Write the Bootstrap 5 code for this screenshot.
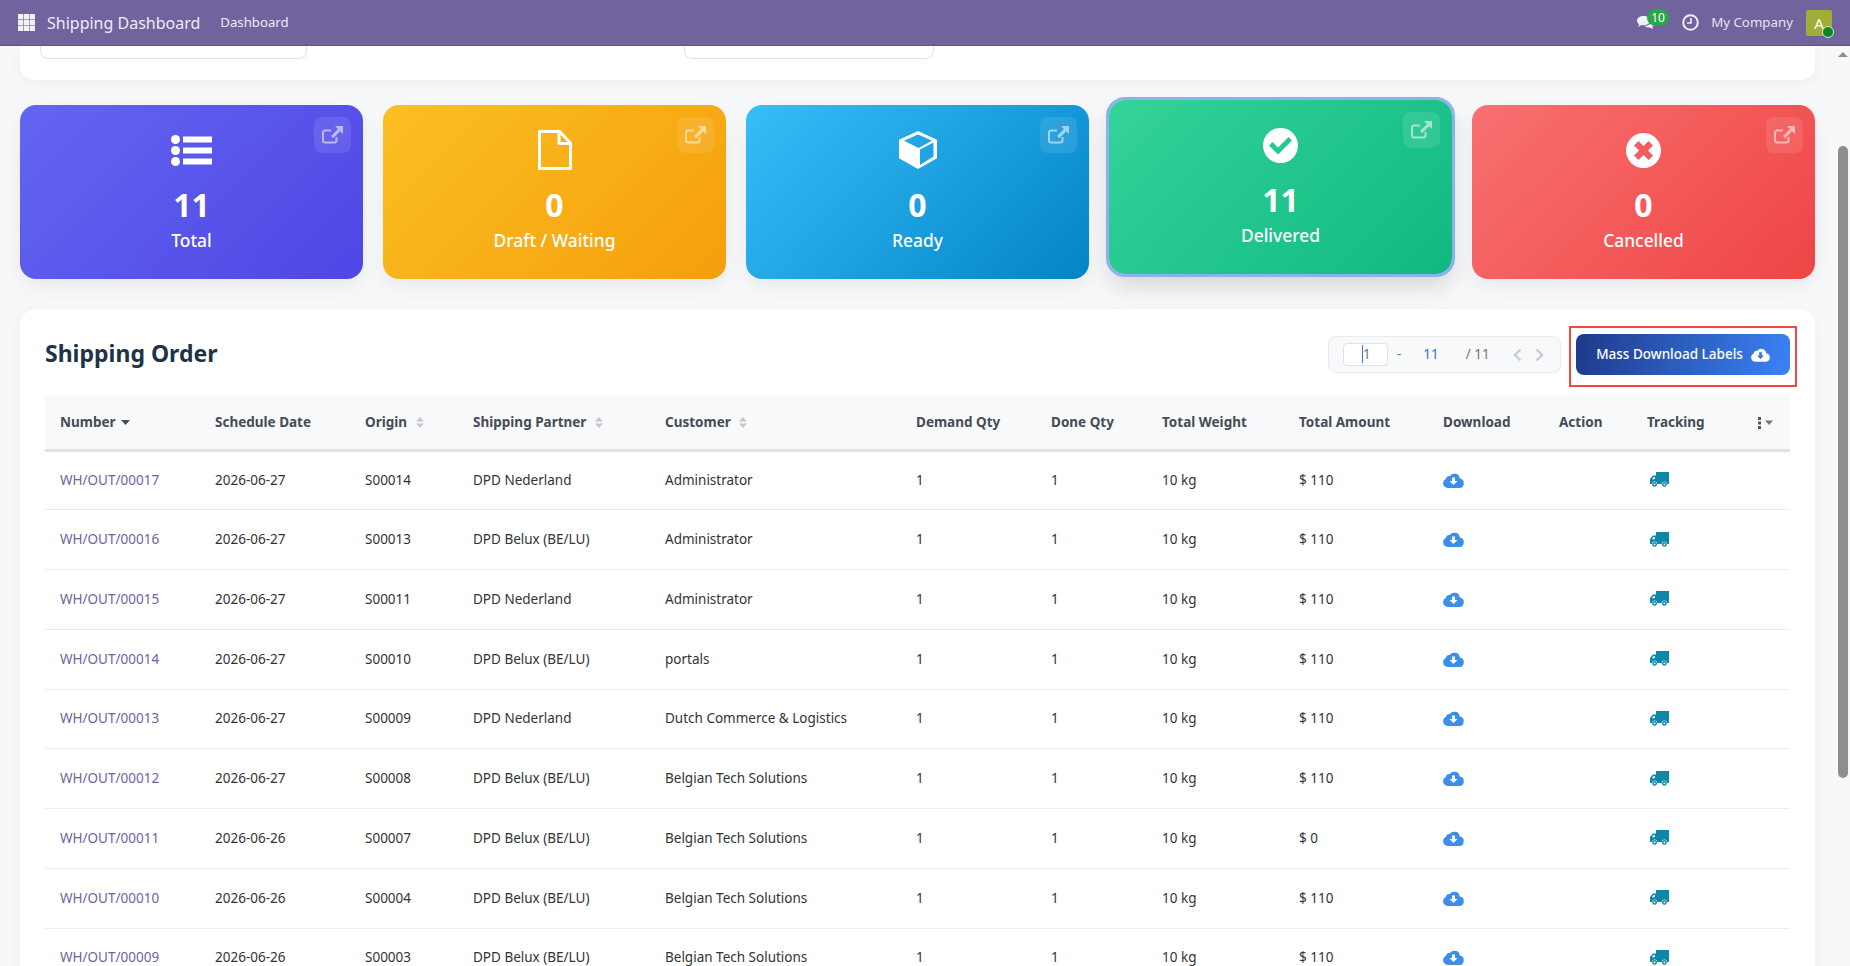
<!DOCTYPE html>
<html lang="en">
<head>
  <meta charset="UTF-8"/>
  <title>Shipping Dashboard</title>
  <link href="https://cdn.jsdelivr.net/npm/bootstrap@5.3.0/dist/css/bootstrap.min.css" rel="stylesheet"/>
  <style>
    html, body { height: 100%; overflow: hidden; }
    body { font-family: "Noto Sans", "Liberation Sans", sans-serif; font-size: 13.5px; color: #333; background: #f7f8fa; }
    .top-nav { height: 46px; background: #71639e; border-bottom: 1px solid #5f5488; padding: 0; color: #f3f1f8; flex-wrap: nowrap; position: relative; z-index: 2; }
    .apps-icon { width: 17px; height: 17px; margin-left: 18px; }
    .nav-title { font-size: 16px; margin-left: 12px; color: #eeebf5; }
    .nav-link-item { font-size: 13.2px; margin-left: 20px; color: #eeebf5; }
    .chat-wrap { width: 38px; height: 26px; }
    .chat-glyph { left: 1px; top: 50%; transform: translateY(-50%); }
    .nav-count { top: -1px; left: 11px; background: #28a745; color: #fff; font-size: 12px; line-height: 17px; height: 17px; padding: 0 4px; border-radius: 9px; }
    .nav-company { font-size: 13.3px; margin: 0 13px 0 12px; color: #e6e2f0; }
    .nav-avatar { width: 26px; height: 26px; background: #a2ad37; color: #fff; font-size: 15px; line-height: 26px; border-radius: 2px; margin-right: 18px; }
    .nav-presence { width: 12px; height: 12px; right: -2px; bottom: -2px; background: #0a8a1e; border: 1px solid #cfe8e8; border-radius: 50%; }
    .page-area { height: calc(100vh - 46px); }
    .main-scroll { padding: 0 20px; overflow: hidden; }
    .filter-panel { height: 34px; background: #fff; border-radius: 0 0 14px 14px; box-shadow: 0 4px 14px rgba(0,0,0,.04); }
    .filter-stub { height: 13px; border: 1px solid #e2e2e2; border-top: 0; border-radius: 0 0 8px 8px; }
    .filter-a { width: 267px; margin-left: 20px; }
    .filter-b { width: 250px; margin-left: 377px; }
    .tile-row { margin-top: 25px; gap: 20px; }
    .stat-tile { flex: 1 1 0; height: 174px; border-radius: 16px; color: #fff; padding-top: 25px; box-shadow: 0 8px 20px rgba(0,0,0,.06); }
    .tile-total { background: linear-gradient(135deg, #6366f1, #4f46e5); }
    .tile-draft { background: linear-gradient(135deg, #fbbf24, #f59e0b); }
    .tile-ready { background: linear-gradient(135deg, #38bdf8, #0284c7); }
    .tile-done { background: linear-gradient(135deg, #34d399, #10b981); transform: translateY(-5px); outline: 3px solid #8fb0ee; box-shadow: 0 12px 24px rgba(0,0,0,.14); }
    .tile-cancel { background: linear-gradient(135deg, #f87171, #ef4444); }
    .tile-icon { height: 40px; }
    .tile-num { font-size: 32px; font-weight: 700; line-height: 40px; margin-top: 15px; }
    .tile-label { font-size: 17.4px; font-weight: 500; line-height: 24px; margin-top: 3px; }
    .tile-open { top: 12px; right: 12px; width: 37px; height: 36px; border-radius: 8px; background: rgba(255,255,255,.1); }
    .order-panel { margin-top: 30px; background: #fff; border-radius: 16px 16px 0 0; padding: 25px 25px 0 25px; box-shadow: 0 4px 14px rgba(0,0,0,.04); }
    .order-head { height: 41px; margin-bottom: 20px; }
    .order-title { font-size: 23px; font-weight: 700; color: #1f3347; margin: 0 0 2px; }
    .pager-box { height: 37px; width: 233px; background: #f8f9fa; border: 1px solid #e9ecef; border-radius: 8px; margin-right: 15px; padding-left: 14px; color: #777; }
    .pager-input { width: 45px; height: 23px; background: #fff; border: 1px solid #dee2e6; border-radius: 4px; padding-left: 18px; line-height: 21px; }
    .pager-caret { border-left: 1px solid #3b6fd8; }
    .pager-dash { margin-left: 9px; }
    .pager-end { color: #3b6fd8; margin-left: 22px; }
    .pager-total { margin-left: 27px; }
    .pager-arrows { margin-left: 23px; gap: 13px; }
    .mass-wrap { width: 214px; }
    .mass-btn { width: 214px; height: 41px; border: 0; border-radius: 8px; color: #fff; font-weight: 500; font-size: 13.5px; background: linear-gradient(100deg, #1e3a8a, #3b82f6); gap: 8px; }
    .red-frame { left: -7px; right: -7px; top: -8px; bottom: -12px; border: 2px solid #f44545; pointer-events: none; }
    .order-table { table-layout: fixed; width: 1745px; margin: 0; }
    .order-table th { height: 55px; background: #f8f9fa; color: #444c55; font-weight: 700; padding: 0 0 0 15px; border-bottom: 3px solid #dee2e6; vertical-align: middle; white-space: nowrap; }
    .order-table td { height: 59.75px; padding: 0 0 1px 15px; color: #333; border-bottom: 1px solid #ececec; vertical-align: middle; white-space: nowrap; }
    .order-table a { color: #71639e; text-decoration: none; }
    .sort-icon { margin-left: 5px; }
    .sort-active { margin-left: 2px; }
    .ic-cloud { width: 21px; height: 16px; display: block; }
    .ic-truck { width: 19px; height: 15px; display: block; margin-left: 3px; }
    .w-a { width: 155px; } .w-b { width: 150px; } .w-c { width: 108px; } .w-d { width: 192px; }
    .w-e { width: 251px; } .w-f { width: 135px; } .w-g { width: 111px; } .w-h { width: 137px; }
    .w-i { width: 144px; } .w-j { width: 116px; } .w-k { width: 88px; } .w-l { width: 111px; } .w-m { width: 47px; }
    .fake-scroll { width: 15px; background: #f8f8f8; }
    .scroll-up { width: 0; height: 0; border: 5px solid transparent; border-top: 0; border-bottom: 5px solid #8e8e8e; margin: 6px auto 0; }
    .scroll-thumb { width: 10px; height: 632px; background: #8e8e8e; border-radius: 5px; margin: 89px 0 0 3px; }
  </style>
</head>
<body>

<svg width="0" height="0" class="d-block position-absolute">
  <symbol id="i-ext" viewBox="0 0 21 18">
    <path d="M14.5 11v3.5a2 2 0 0 1-2 2H3a2 2 0 0 1-2-2V6.5a2 2 0 0 1 2-2h6" fill="none" stroke="#fff" stroke-width="2"/>
    <path d="M13 0h8v8l-2.8-2.8-7 7-2.2-2.2 7-7z" fill="#fff"/>
  </symbol>
  <symbol id="i-cloud" viewBox="0 0 21 16">
    <path fill-rule="evenodd" d="M4.800 16A4.800 4.800 0 0 1 3 6.800 3 3 0 0 1 6.800 4.100 5.500 5.500 0 0 1 16.800 6.500 4.800 4.800 0 0 1 16.500 16zM9 5.500V9H6.500l4 4 4-4H12V5.500z"/>
  </symbol>
  <symbol id="i-truck" viewBox="0 0 19 15">
    <path fill-rule="evenodd" d="M6 0h13v12h-2a2.600 2.600 0 0 0-5.200 0H7.200a2.600 2.600 0 0 0-5.200 0H0V7l3-3.500h3zM1.800 7.200h3V5H3.700z"/>
    <path fill-rule="evenodd" d="M4.600 10a2.400 2.400 0 1 0 .01 0zm0 1.500a.9.9 0 1 1-.01 0zM14.400 10a2.400 2.400 0 1 0 .01 0zm0 1.500a.9.9 0 1 1-.01 0z"/>
  </symbol>
</svg>

<nav class="navbar top-nav">
  <div class="d-flex align-items-center">
    <svg class="apps-icon" viewBox="0 0 17 17" fill="#f3f1f8">
      <rect width="5.300" height="5.300"/><rect x="5.850" width="5.300" height="5.300"/><rect x="11.700" width="5.300" height="5.300"/>
      <rect y="5.850" width="5.300" height="5.300"/><rect x="5.850" y="5.850" width="5.300" height="5.300"/><rect x="11.700" y="5.850" width="5.300" height="5.300"/>
      <rect y="11.700" width="5.300" height="5.300"/><rect x="5.850" y="11.700" width="5.300" height="5.300"/><rect x="11.700" y="11.700" width="5.300" height="5.300"/>
    </svg>
    <span class="nav-title">Shipping Dashboard</span>
    <span class="nav-link-item">Dashboard</span>
  </div>
  <div class="d-flex align-items-center">
    <div class="chat-wrap position-relative">
      <svg class="chat-glyph position-absolute" width="18" height="16" viewBox="0 0 18 16" fill="#f3f1f8">
        <path d="M6.500 1C3 1 0 3 0 5.700c0 1.500.9 2.700 2.200 3.500L1.200 12l3.300-1.900c.7.100 1.300.2 2 .2 3.600 0 6.500-2 6.500-4.600S10.100 1 6.500 1z"/>
        <path d="M14.500 5.500c0 3-3 5.500-7 5.600 1 .9 2.300 1.400 3.800 1.400.5 0 1 0 1.500-.1l3.200 1.600-.8-2.600C16.900 10.600 18 9.300 18 8c0-1.300-1.400-2.500-3.500-2.500z"/>
      </svg>
      <span class="nav-count position-absolute">10</span>
    </div>
    <svg class="ms-2" width="17" height="17" viewBox="0 0 17 17" fill="none" stroke="#f3f1f8" stroke-width="2">
      <circle cx="8.500" cy="8.500" r="7.300"/><path d="M9 4v5H5" stroke-width="1.600"/>
    </svg>
    <span class="nav-company">My Company</span>
    <div class="nav-avatar position-relative text-center">A<span class="nav-presence position-absolute"></span></div>
  </div>
</nav>

<div class="page-area d-flex">
  <div class="main-scroll flex-grow-1">
    <div class="filter-panel d-flex">
      <div class="filter-stub filter-a"></div>
      <div class="filter-stub filter-b"></div>
    </div>

    <div class="tile-row d-flex">
      <div class="stat-tile tile-total position-relative d-flex flex-column align-items-center">
        <div class="tile-open position-absolute d-flex align-items-center justify-content-center"><svg width="21" height="18" opacity=".55"><use href="#i-ext"/></svg></div>
        <div class="tile-icon d-flex align-items-center">
          <svg width="41" height="31" viewBox="0 0 41 31" fill="#fff">
            <circle cx="4.500" cy="4.500" r="4.500"/><circle cx="4.500" cy="15.500" r="4.500"/><circle cx="4.500" cy="26.500" r="4.500"/>
            <rect x="12" y="1.500" width="29" height="6"/><rect x="12" y="12.500" width="29" height="6"/><rect x="12" y="23.500" width="29" height="6"/>
          </svg>
        </div>
        <div class="tile-num">11</div>
        <div class="tile-label">Total</div>
      </div>

      <div class="stat-tile tile-draft position-relative d-flex flex-column align-items-center">
        <div class="tile-open position-absolute d-flex align-items-center justify-content-center"><svg width="21" height="18" opacity=".55"><use href="#i-ext"/></svg></div>
        <div class="tile-icon d-flex align-items-center">
          <svg width="34" height="40" viewBox="0 0 34 40" fill="none" stroke="#fff" stroke-width="3" stroke-linejoin="round">
            <path d="M1.500 1.500h20L32.500 13v25.500h-31z"/><path d="M21 1.500V13.500h11.500"/>
          </svg>
        </div>
        <div class="tile-num">0</div>
        <div class="tile-label">Draft / Waiting</div>
      </div>

      <div class="stat-tile tile-ready position-relative d-flex flex-column align-items-center">
        <div class="tile-open position-absolute d-flex align-items-center justify-content-center"><svg width="21" height="18" opacity=".55"><use href="#i-ext"/></svg></div>
        <div class="tile-icon d-flex align-items-center">
          <svg width="38" height="38" viewBox="0 0 38 38" fill="#fff">
            <path fill-rule="evenodd" d="M19 0 38 8.700v18.600L19 38 0 27.300V8.700zM19 3.500 5 9.700 19.500 17 33 9.700zM21 18.500V34l13.500-8.500v-14z"/>
          </svg>
        </div>
        <div class="tile-num">0</div>
        <div class="tile-label">Ready</div>
      </div>

      <div class="stat-tile tile-done position-relative d-flex flex-column align-items-center">
        <div class="tile-open position-absolute d-flex align-items-center justify-content-center"><svg width="21" height="18" opacity=".55"><use href="#i-ext"/></svg></div>
        <div class="tile-icon d-flex align-items-center">
          <svg width="35" height="35" viewBox="0 0 35 35" fill="#fff">
            <path fill-rule="evenodd" d="M17.500 0a17.500 17.500 0 1 1-.01 0zM15 26.500l14-14-3.500-3.500L15 19.500l-5.500-5.500L6 17.500z"/>
          </svg>
        </div>
        <div class="tile-num">11</div>
        <div class="tile-label">Delivered</div>
      </div>

      <div class="stat-tile tile-cancel position-relative d-flex flex-column align-items-center">
        <div class="tile-open position-absolute d-flex align-items-center justify-content-center"><svg width="21" height="18" opacity=".55"><use href="#i-ext"/></svg></div>
        <div class="tile-icon d-flex align-items-center">
          <svg width="35" height="35" viewBox="0 0 35 35" fill="#fff">
            <path fill-rule="evenodd" d="M17.500 0a17.500 17.500 0 1 1-.01 0zM17.500 13 12.500 8 8 12.500l5 5-5 5 4.500 4.500 5-5 5 5 4.500-4.500-5-5 5-5L22.500 8z"/>
          </svg>
        </div>
        <div class="tile-num">0</div>
        <div class="tile-label">Cancelled</div>
      </div>
    </div>

    <div class="order-panel">
      <div class="order-head d-flex align-items-center justify-content-between">
        <h2 class="order-title">Shipping Order</h2>
        <div class="d-flex align-items-center">
          <div class="pager-box d-flex align-items-center">
            <div class="pager-input"><span class="pager-caret">1</span></div>
            <span class="pager-dash">-</span>
            <span class="pager-end">11</span>
            <span class="pager-total">/ 11</span>
            <span class="pager-arrows d-flex">
              <svg width="9" height="14" viewBox="0 0 9 14" fill="none" stroke="#c8ccd0" stroke-width="2.400"><path d="M7.500 1.500 2 7l5.500 5.500"/></svg>
              <svg width="9" height="14" viewBox="0 0 9 14" fill="none" stroke="#c8ccd0" stroke-width="2.400"><path d="M1.500 1.500 7 7l-5.500 5.500"/></svg>
            </span>
          </div>
          <div class="mass-wrap position-relative">
            <button class="btn mass-btn d-flex align-items-center justify-content-center p-0">Mass Download Labels
              <svg width="19" height="15" fill="#fff"><use href="#i-cloud"/></svg>
            </button>
            <div class="red-frame position-absolute"></div>
          </div>
        </div>
      </div>

      <table class="table order-table">
        <colgroup>
          <col class="w-a"/><col class="w-b"/><col class="w-c"/><col class="w-d"/><col class="w-e"/><col class="w-f"/><col class="w-g"/>
          <col class="w-h"/><col class="w-i"/><col class="w-j"/><col class="w-k"/><col class="w-l"/><col class="w-m"/>
        </colgroup>
        <thead>
          <tr>
            <th>Number <svg class="sort-active" width="9" height="5" viewBox="0 0 9 5" fill="#444c55"><path d="M0 0h9L4.500 5z"/></svg></th>
            <th>Schedule Date</th>
            <th>Origin <svg class="sort-icon" width="8" height="11" viewBox="0 0 8 11" fill="#c4c8cc"><path d="M0 4.500 4 0l4 4.500zM0 6.500h8L4 11z"/></svg></th>
            <th>Shipping Partner <svg class="sort-icon" width="8" height="11" viewBox="0 0 8 11" fill="#c4c8cc"><path d="M0 4.500 4 0l4 4.500zM0 6.500h8L4 11z"/></svg></th>
            <th>Customer <svg class="sort-icon" width="8" height="11" viewBox="0 0 8 11" fill="#c4c8cc"><path d="M0 4.500 4 0l4 4.500zM0 6.500h8L4 11z"/></svg></th>
            <th>Demand Qty</th>
            <th>Done Qty</th>
            <th>Total Weight</th>
            <th>Total Amount</th>
            <th>Download</th>
            <th>Action</th>
            <th>Tracking</th>
            <th><svg width="15" height="12" viewBox="0 0 15 12" fill="#555"><rect y="0" width="3" height="3"/><rect y="4.500" width="3" height="3"/><rect y="9" width="3" height="3"/><path d="M7 3.500h8L11 8z" fill="#777"/></svg></th>
          </tr>
        </thead>
        <tbody>
          <tr><td><a href="#">WH/OUT/00017</a></td><td>2026-06-27</td><td>S00014</td><td>DPD Nederland</td><td>Administrator</td><td>1</td><td>1</td><td>10 kg</td><td>$ 110</td><td><svg class="ic-cloud" fill="#3b8fe8"><use href="#i-cloud"/></svg></td><td></td><td><svg class="ic-truck" fill="#0d86a8"><use href="#i-truck"/></svg></td><td></td></tr>
          <tr><td><a href="#">WH/OUT/00016</a></td><td>2026-06-27</td><td>S00013</td><td>DPD Belux (BE/LU)</td><td>Administrator</td><td>1</td><td>1</td><td>10 kg</td><td>$ 110</td><td><svg class="ic-cloud" fill="#3b8fe8"><use href="#i-cloud"/></svg></td><td></td><td><svg class="ic-truck" fill="#0d86a8"><use href="#i-truck"/></svg></td><td></td></tr>
          <tr><td><a href="#">WH/OUT/00015</a></td><td>2026-06-27</td><td>S00011</td><td>DPD Nederland</td><td>Administrator</td><td>1</td><td>1</td><td>10 kg</td><td>$ 110</td><td><svg class="ic-cloud" fill="#3b8fe8"><use href="#i-cloud"/></svg></td><td></td><td><svg class="ic-truck" fill="#0d86a8"><use href="#i-truck"/></svg></td><td></td></tr>
          <tr><td><a href="#">WH/OUT/00014</a></td><td>2026-06-27</td><td>S00010</td><td>DPD Belux (BE/LU)</td><td>portals</td><td>1</td><td>1</td><td>10 kg</td><td>$ 110</td><td><svg class="ic-cloud" fill="#3b8fe8"><use href="#i-cloud"/></svg></td><td></td><td><svg class="ic-truck" fill="#0d86a8"><use href="#i-truck"/></svg></td><td></td></tr>
          <tr><td><a href="#">WH/OUT/00013</a></td><td>2026-06-27</td><td>S00009</td><td>DPD Nederland</td><td>Dutch Commerce &amp; Logistics</td><td>1</td><td>1</td><td>10 kg</td><td>$ 110</td><td><svg class="ic-cloud" fill="#3b8fe8"><use href="#i-cloud"/></svg></td><td></td><td><svg class="ic-truck" fill="#0d86a8"><use href="#i-truck"/></svg></td><td></td></tr>
          <tr><td><a href="#">WH/OUT/00012</a></td><td>2026-06-27</td><td>S00008</td><td>DPD Belux (BE/LU)</td><td>Belgian Tech Solutions</td><td>1</td><td>1</td><td>10 kg</td><td>$ 110</td><td><svg class="ic-cloud" fill="#3b8fe8"><use href="#i-cloud"/></svg></td><td></td><td><svg class="ic-truck" fill="#0d86a8"><use href="#i-truck"/></svg></td><td></td></tr>
          <tr><td><a href="#">WH/OUT/00011</a></td><td>2026-06-26</td><td>S00007</td><td>DPD Belux (BE/LU)</td><td>Belgian Tech Solutions</td><td>1</td><td>1</td><td>10 kg</td><td>$ 0</td><td><svg class="ic-cloud" fill="#3b8fe8"><use href="#i-cloud"/></svg></td><td></td><td><svg class="ic-truck" fill="#0d86a8"><use href="#i-truck"/></svg></td><td></td></tr>
          <tr><td><a href="#">WH/OUT/00010</a></td><td>2026-06-26</td><td>S00004</td><td>DPD Belux (BE/LU)</td><td>Belgian Tech Solutions</td><td>1</td><td>1</td><td>10 kg</td><td>$ 110</td><td><svg class="ic-cloud" fill="#3b8fe8"><use href="#i-cloud"/></svg></td><td></td><td><svg class="ic-truck" fill="#0d86a8"><use href="#i-truck"/></svg></td><td></td></tr>
          <tr><td><a href="#">WH/OUT/00009</a></td><td>2026-06-26</td><td>S00003</td><td>DPD Belux (BE/LU)</td><td>Belgian Tech Solutions</td><td>1</td><td>1</td><td>10 kg</td><td>$ 110</td><td><svg class="ic-cloud" fill="#3b8fe8"><use href="#i-cloud"/></svg></td><td></td><td><svg class="ic-truck" fill="#0d86a8"><use href="#i-truck"/></svg></td><td></td></tr>
        </tbody>
      </table>
    </div>
  </div>

  <div class="fake-scroll flex-shrink-0">
    <div class="scroll-up"></div>
    <div class="scroll-thumb"></div>
  </div>
</div>

<script src="https://cdn.jsdelivr.net/npm/bootstrap@5.3.0/dist/js/bootstrap.bundle.min.js"></script>
</body>
</html>
